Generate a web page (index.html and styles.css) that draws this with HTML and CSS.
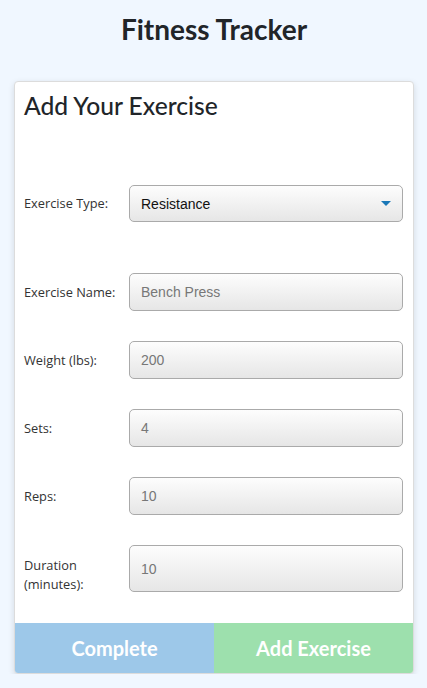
FILE: index.html
```html
<!DOCTYPE html>
<html>
<head>
<meta charset="utf-8">
<link rel="stylesheet" href="styles.css">
</head>
<body>
<h1 class="title">Fitness Tracker</h1>
<div class="card">
  <div class="card-body">
    <h2 class="card-title">Add Your Exercise</h2>
    <div class="row row-type">
      <label class="label">Exercise Type:</label>
      <div class="field select">
        <span class="value dark">Resistance</span>
        <svg class="caret" width="10" height="5" viewBox="0 0 10 5"><path d="M0 0H10L5 5Z" fill="#1a78b8"/></svg>
      </div>
    </div>
    <div class="row row-first">
      <label class="label">Exercise Name:</label>
      <div class="field"><span class="value">Bench Press</span></div>
    </div>
    <div class="row">
      <label class="label">Weight (lbs):</label>
      <div class="field"><span class="value">200</span></div>
    </div>
    <div class="row">
      <label class="label">Sets:</label>
      <div class="field"><span class="value">4</span></div>
    </div>
    <div class="row">
      <label class="label">Reps:</label>
      <div class="field"><span class="value">10</span></div>
    </div>
    <div class="row row-top">
      <label class="label label-low">Duration<br>(minutes):</label>
      <div class="field tall"><span class="value">10</span></div>
    </div>
  </div>
  <div class="buttons">
    <button class="btn btn-complete">Complete</button>
    <button class="btn btn-add">Add Exercise</button>
  </div>
</div>
</body>
</html>
```
FILE: styles.css
```css
html, body { margin: 0; padding: 0; }
body {
  background: #f0f7ff;
  font-family: "Open Sans", "Noto Sans", sans-serif;
  color: #212529;
  padding: 0 13px 0 14px;
}
.title {
  margin: 0;
  padding-top: 11px;
  height: 81px;
  box-sizing: border-box;
  font-family: Lato, sans-serif;
  font-weight: 700;
  font-size: 28px;
  line-height: 36px;
  text-align: center;
  color: #212529;
}
.card {
  background: #fff;
  border: 1px solid #dcdcdc;
  border-radius: 4px;
  box-shadow: 0 2px 6px rgba(0,0,0,0.12);
  overflow: hidden;
}
.card-body {
  padding: 10px 10px 29px 9px;
}
.card-title {
  margin: 0;
  font-family: Lato, sans-serif;
  font-weight: 500;
  font-size: 24.6px;
  line-height: 28px;
  color: #212529;
}
.row {
  display: flex;
  align-items: center;
  margin-top: 30px;
}
.row-top { align-items: flex-start; }
.row-type { margin-top: 65px; }
.row-first { margin-top: 51px; }
.label {
  width: 105px;
  flex: none;
  font-size: 12.8px;
  line-height: 19px;
  color: #333;
}
.label-low { padding-top: 11px; }
.field {
  flex: 1;
  height: 38px;
  box-sizing: border-box;
  border: 1px solid #aaa;
  border-radius: 5px;
  background: linear-gradient(#fdfdfd, #e6e6e6);
  display: flex;
  align-items: center;
  padding: 0 11px;
  font-family: "Liberation Sans", Arial, sans-serif;
  font-size: 14px;
}
.select { height: 37px; justify-content: space-between; }
.tall { height: 47px; }
.value { color: #777; }
.value.dark { color: #111; }
.caret { margin-right: 0; }
.buttons {
  display: flex;
}
.btn {
  flex: 1;
  height: 50px;
  border: 0;
  margin: 0;
  font-family: Lato, sans-serif;
  font-weight: 700;
  font-size: 20px;
  color: #fff;
}
.btn-complete { background: #9dc8e9; }
.btn-add { background: #9de0ad; }
```
